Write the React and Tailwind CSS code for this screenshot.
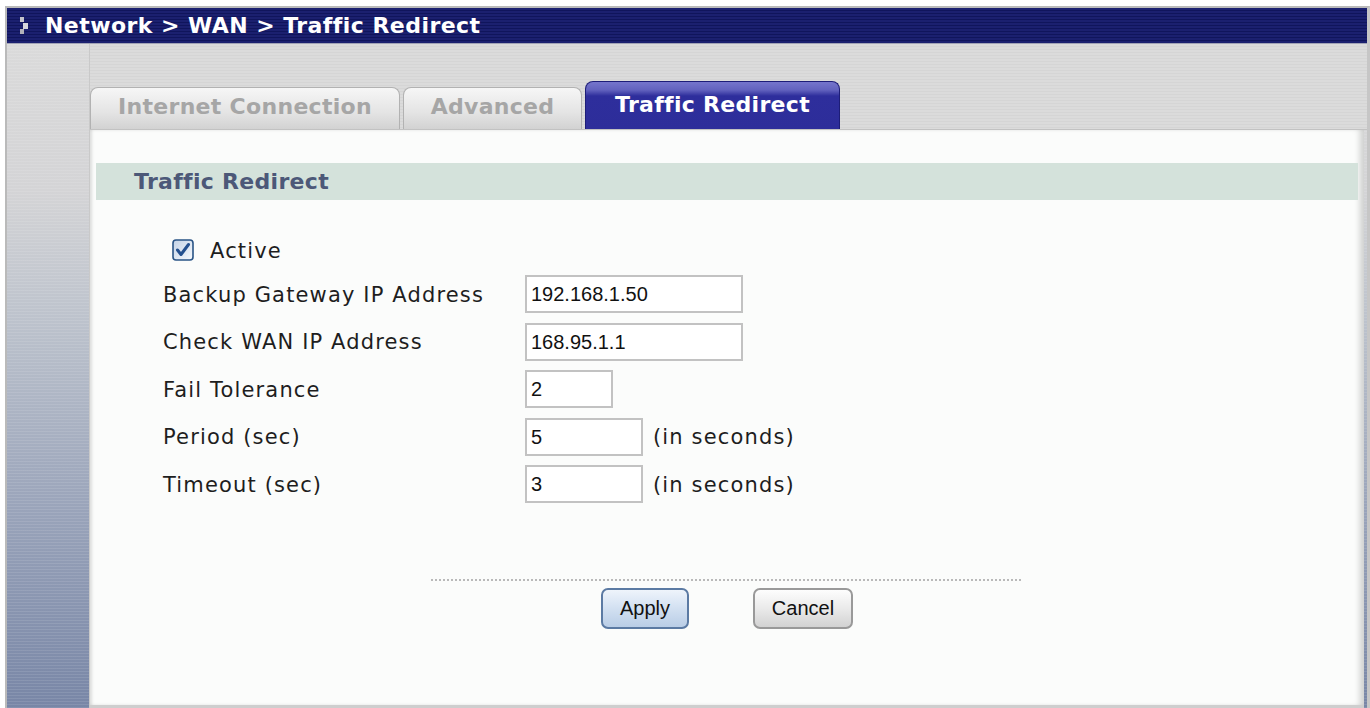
const rows = [
  { label: 'Backup Gateway IP Address', value: '192.168.1.50', width: 'w-[218px]' },
  { label: 'Check WAN IP Address', value: '168.95.1.1', width: 'w-[218px]' },
  { label: 'Fail Tolerance', value: '2', width: 'w-[88px]' },
  { label: 'Period (sec)', value: '5', width: 'w-[118px]', note: '(in seconds)' },
  { label: 'Timeout (sec)', value: '3', width: 'w-[118px]', note: '(in seconds)' },
];

const CheckBox = () => (
  <svg width="22" height="22" viewBox="0 0 22 22">
    <defs>
      <linearGradient id="cbFill" x1="0" y1="0" x2="1" y2="1">
        <stop offset="0" stopColor="#c3d2e6" />
        <stop offset="1" stopColor="#f6f9fd" />
      </linearGradient>
    </defs>
    <rect x="1" y="1" width="20" height="20" rx="3" fill="url(#cbFill)" stroke="#2a5486" strokeWidth="1.6" />
    <path d="M5.5 11 L9 15.5 L16.5 5.5" fill="none" stroke="#24508f" strokeWidth="3" strokeLinecap="round" strokeLinejoin="round" />
  </svg>
);

// little three-block arrow in front of the breadcrumb
const Crumb = () => (
  <svg width="9" height="18" viewBox="0 0 9 18">
    <rect x="0" y="0" width="4" height="5" fill="#c4c4cc" />
    <rect x="3" y="6" width="5" height="6" fill="#d6d6dc" />
    <rect x="0" y="12" width="4" height="5" fill="#b2b2ba" />
  </svg>
);

const Tab = ({ label, active, width }) =>
  active ? (
    <div
      className={`${width} h-[48px] rounded-t-[8px] border border-[#1d1d78] border-b-0 bg-[linear-gradient(to_bottom,#7575cc_0px,#6262be_8px,#2e2e9c_14px,#2d2d9a_100%)] flex items-center justify-center text-white font-bold text-[22px] tracking-[0.3px] pb-[2px]`}
    >
      {label}
    </div>
  ) : (
    <div
      className={`${width} h-[42px] rounded-t-[8px] border border-[#b2b2b2] border-b-0 bg-[linear-gradient(to_bottom,#f6f6f6_0%,#e4e4e4_60%,#d2d2d2_100%)] flex items-center justify-center text-[#a6a6a6] font-bold text-[22px] tracking-[0.3px] pb-[5px]`}
    >
      {label}
    </div>
  );

export default function App() {
  return (
    <div className="w-[1370px] h-[708px] overflow-hidden bg-white pt-[6px] pl-[5px] font-['DejaVu_Sans',Verdana,sans-serif]">
      <div className="h-full flex flex-col border-l-2 border-t-2 border-r-[3px] border-[#bababa] border-r-[#c6c6c6]">
        {/* title bar */}
        <div className="h-[36px] shrink-0 flex items-center pl-[13px] gap-[16px] border-b border-[#a2a4b6] bg-[repeating-linear-gradient(to_bottom,#1b206f_0px,#1b206f_2px,#10155c_2px,#10155c_3px)]">
          <Crumb />
          <span className="text-white font-bold text-[22px] tracking-[0.45px] leading-none">
            Network &gt; WAN &gt; Traffic Redirect
          </span>
        </div>

        {/* body */}
        <div className="flex-1 flex bg-[repeating-linear-gradient(to_bottom,rgba(255,255,255,0.10)_0px,rgba(255,255,255,0.10)_1px,transparent_1px,transparent_3px),linear-gradient(to_bottom,#dadada_0%,#d4d4d6_22%,#bcc2cc_42%,#9aa4ba_70%,#7886a6_100%)]">
          <div className="w-[83px] shrink-0 border-r border-[#c9c9c9]" />

          <div className="flex-1 flex flex-col">
            {/* tab strip */}
            <div className="h-[86px] shrink-0 flex items-end gap-[3px] bg-[repeating-linear-gradient(to_bottom,#dbdbdb_0px,#dbdbdb_2px,#d5d5d5_2px,#d5d5d5_3px)] border-b border-[#c2c2c2]">
              <Tab label="Internet Connection" width="w-[310px]" />
              <Tab label="Advanced" width="w-[179px]" />
              <Tab label="Traffic Redirect" width="w-[255px]" active />
            </div>

            {/* content panel */}
            <div className="flex-1 mr-[3px] flex flex-col bg-[#fbfcfb] border-b-[3px] border-[#cecece] shadow-[inset_3px_0_3px_-1px_rgba(0,0,0,0.12),inset_-7px_0_6px_-3px_rgba(0,0,0,0.18)]">
              <div className="mt-[33px] ml-[6px] mr-[6px] h-[37px] bg-[#d4e2db] flex items-center pl-[38px] text-[#4c5878] font-bold text-[22px] tracking-[0.3px]">
                Traffic Redirect
              </div>

              <div className="pl-[73px] mt-[39px] text-[#1e1e1e] text-[21px] tracking-[1.15px]">
                <div className="h-[22px] flex items-center">
                  <div className="ml-[9px] w-[22px] h-[22px]">
                    <CheckBox />
                  </div>
                  <span className="ml-[16px] pt-[3px]">Active</span>
                </div>

                <div className="mt-[14px] flex flex-col gap-[9.5px]">
                  {rows.map((r) => (
                    <div key={r.label} className="h-[38px] flex items-center">
                      <span className="w-[362px] shrink-0 pt-[3px]">{r.label}</span>
                      <div
                        className={`${r.width} h-[38px] border-2 border-[#c2c2c2] bg-white flex items-center pl-[4px] font-['Liberation_Sans',Arial,sans-serif] text-[20px] tracking-normal text-[#111]`}
                      >
                        {r.value}
                      </div>
                      {r.note && <span className="ml-[10px] pt-[3px]">{r.note}</span>}
                    </div>
                  ))}
                </div>
              </div>

              <div className="mt-[76px] mx-auto w-[592px] h-[2px] bg-[repeating-linear-gradient(to_right,#b9b9b9_0px,#b9b9b9_2px,transparent_2px,transparent_4px)]" />

              <div className="mt-[7px] flex justify-center gap-[64px] font-['Liberation_Sans',Arial,sans-serif] text-[20px] text-[#111]">
                <button className="w-[88px] h-[41px] rounded-[7px] border-2 border-[#5b7aa3] bg-[linear-gradient(to_bottom,#eef4fb_0%,#d2e0f1_50%,#b9cde6_100%)] pb-[2px]">
                  Apply
                </button>
                <button className="w-[100px] h-[41px] rounded-[7px] border-2 border-[#999] bg-[linear-gradient(to_bottom,#fdfdfd_0%,#eaeaea_50%,#d2d2d2_100%)] pb-[2px]">
                  Cancel
                </button>
              </div>
            </div>
          </div>
        </div>
      </div>
    </div>
  );
}
